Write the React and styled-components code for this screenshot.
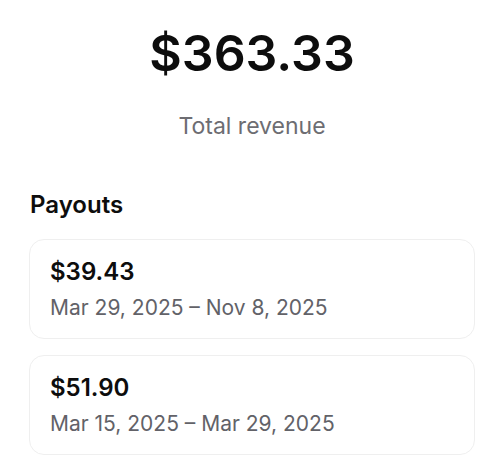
import React from "react";
import styled, { createGlobalStyle } from "styled-components";

const GlobalStyle = createGlobalStyle`
  body {
    margin: 0;
    background: #ffffff;
    font-family: Inter, "Noto Sans", sans-serif;
    color: #0d0d0d;
  }
`;

const Page = styled.div`
  width: 500px;
  padding: 0 25px 0 29px;
  box-sizing: border-box;
`;

const Summary = styled.div`
  display: flex;
  flex-direction: column;
  align-items: center;
  padding-top: 23px;
`;

const Total = styled.div`
  font-size: 50px;
  font-weight: 600;
  line-height: 60px;
`;

const TotalLabel = styled.div`
  margin-top: 30px;
  font-size: 23px;
  line-height: 26px;
  color: #6d6d72;
`;

const SectionTitle = styled.h2`
  margin: 51px 0 0 1px;
  font-size: 24px;
  font-weight: 600;
  line-height: 30px;
`;

const List = styled.div`
  display: flex;
  flex-direction: column;
  gap: 16px;
  margin-top: 19px;
`;

const Card = styled.div`
  border: 1px solid #efefef;
  border-radius: 15px;
  padding: 17px 20px;
  display: flex;
  flex-direction: column;
  gap: 8px;
`;

const Amount = styled.div`
  font-size: 24px;
  font-weight: 600;
  line-height: 30px;
`;

const Period = styled.div`
  font-size: 21px;
  line-height: 26px;
  color: #626268;
`;

const PAYOUTS = [
  { amount: "$39.43", period: "Mar 29, 2025 – Nov 8, 2025" },
  { amount: "$51.90", period: "Mar 15, 2025 – Mar 29, 2025" },
];

export default function App() {
  return (
    <>
      <GlobalStyle />
      <Page>
        <Summary>
          <Total>$363.33</Total>
          <TotalLabel>Total revenue</TotalLabel>
        </Summary>
        <SectionTitle>Payouts</SectionTitle>
        <List>
          {PAYOUTS.map((payout) => (
            <Card key={payout.amount}>
              <Amount>{payout.amount}</Amount>
              <Period>{payout.period}</Period>
            </Card>
          ))}
        </List>
      </Page>
    </>
  );
}
